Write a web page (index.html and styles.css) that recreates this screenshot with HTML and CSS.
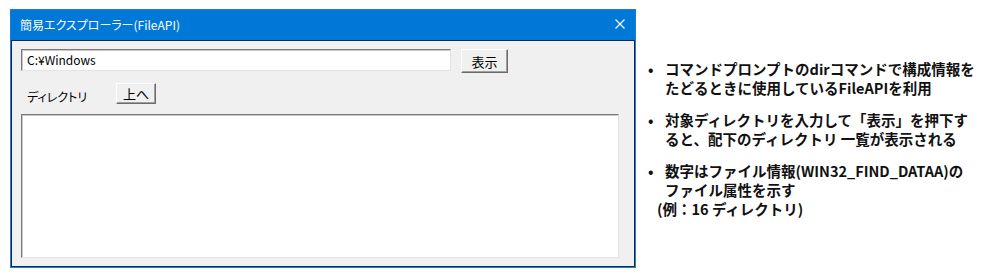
FILE: index.html
```html
<!DOCTYPE html>
<html lang="ja">
<head>
    <meta charset="UTF-8">
    <meta name="viewport" content="width=device-width, initial-scale=1.0">
    <title>簡易エクスプローラー</title>
    <link rel="stylesheet" href="styles.css">
</head>
<body>
    <div class="window">
        <div class="titlebar">
            <span class="title">簡易エクスプローラー(FileAPI)</span>
            <svg class="close" width="10" height="10" viewBox="0 0 10 10">
                <path d="M0.5 0.5 L9.5 9.5 M9.5 0.5 L0.5 9.5" stroke="#fff" stroke-width="1.1" fill="none"/>
            </svg>
        </div>
        <div class="client">
            <div class="row">
                <div class="textbox">C:¥Windows</div>
                <button type="button" class="btn btn-show">表示</button>
            </div>
            <div class="row row-dir">
                <span class="label">ディレクトリ</span>
                <button type="button" class="btn btn-up">上へ</button>
            </div>
            <div class="listbox"></div>
        </div>
    </div>
    <ul class="notes">
        <li>
            <span class="dot">•</span>
            <p>コマンドプロンプトのdirコマンドで構成情報を<br>たどるときに使用しているFileAPIを利用</p>
        </li>
        <li>
            <span class="dot">•</span>
            <p>対象ディレクトリを入力して「表示」を押下す<br>ると、配下のディレクトリ 一覧が表示される</p>
        </li>
        <li class="last">
            <span class="dot">•</span>
            <p>数字はファイル情報(WIN32_FIND_DATAA)の<br>ファイル属性を示す<span class="example">(例：16 ディレクトリ)</span></p>
        </li>
    </ul>
</body>
</html>
```

FILE: styles.css
```css
body {
    margin: 0;
    padding: 9px 0 0 10px;
    background: #fff;
    color: #000;
    font-family: "Noto Sans CJK JP", "Noto Sans", sans-serif;
    display: flex;
    align-items: flex-start;
}
.window {
    width: 624px;
    border: 1px solid #1c7fd6;
    background: #0078d7;
}
.titlebar {
    height: 30px;
    display: flex;
    align-items: center;
    justify-content: space-between;
    padding: 0 10px 0 9px;
    color: #fff;
    font-size: 12px;
    font-feature-settings: "palt";
}
.title {
    margin-top: -1px;
}
.close {
    display: block;
    margin-top: -2px;
}
.client {
    height: 217px;
    border: 1px solid #17294a;
    background: #f0f0f0;
    padding: 8px 9px 0;
    font-size: 12px;
    font-feature-settings: "palt";
}
.client .row {
    display: flex;
    align-items: flex-start;
}
.textbox {
    box-sizing: border-box;
    width: 430px;
    height: 22px;
    line-height: 20px;
    padding-left: 5px;
    background: #fff;
    border: 1px solid;
    border-color: #7a7a7a #e3e3e3 #e3e3e3 #7a7a7a;
    box-shadow: inset 1px 1px 0 #c8c8c8;
    font-size: 12px;
}
.btn {
    box-sizing: border-box;
    background: #f0f0f0;
    border: 1px solid;
    border-color: #fff #6b6b6b #6b6b6b #fff;
    box-shadow: inset -1px -1px 0 #a0a0a0, 1px 1px 0 #f0f0f0;
    font-family: inherit;
    font-size: 13px;
    padding: 0;
    color: #000;
    cursor: pointer;
}
.btn-show {
    width: 47px;
    height: 24px;
    margin-left: 10px;
}
.row-dir {
    margin-top: 10px;
}
.label {
    margin: 5px 0 0 6px;
    width: 89px;
}
.btn-up {
    width: 40px;
    height: 21px;
}
.listbox {
    margin-top: 9px;
    width: 598px;
    height: 144px;
    box-sizing: border-box;
    background: #fff;
    border: 1px solid;
    border-color: #7a7a7a #e3e3e3 #e3e3e3 #7a7a7a;
    box-shadow: inset 1px 1px 0 #c8c8c8;
}
.notes {
    list-style: none;
    margin: 50px 0 0 9px;
    padding: 0;
    font-size: 14.5px;
    font-weight: 700;
    line-height: 19px;
    color: #111;
}
.notes li {
    display: flex;
    margin-bottom: 13px;
}
.notes li.last {
    margin-top: 2px;
}
.notes .dot {
    width: 20px;
    padding-left: 3px;
    box-sizing: border-box;
}
.notes p {
    margin: 0;
}
.notes .example {
    display: block;
    margin-left: -8px;
}
```
